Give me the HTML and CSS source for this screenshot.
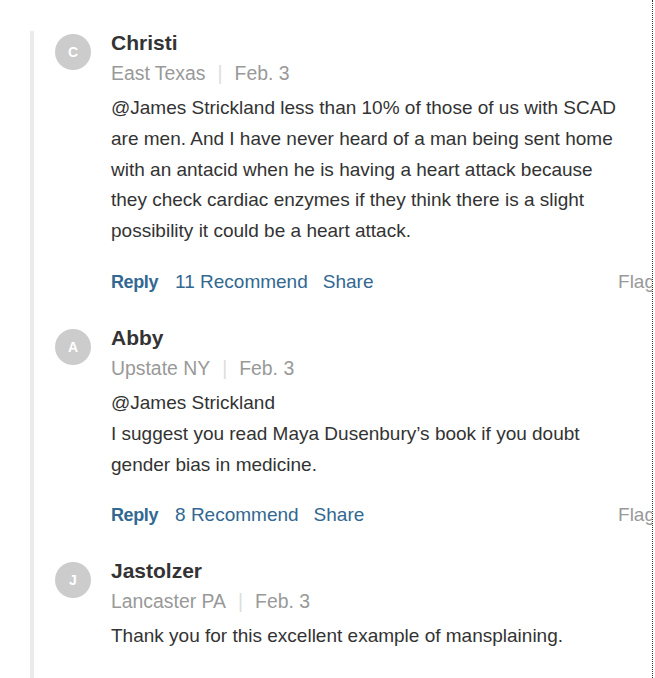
FILE: index.html
```html
<!DOCTYPE html>
<html>
<head>
<meta charset="utf-8">
<link rel="stylesheet" href="styles.css">
</head>
<body>
<div class="page">
  <div class="thread">
    <div class="comment">
      <div class="avatar">C</div>
      <div class="content">
        <div class="name">Christi</div>
        <div class="meta">East Texas<span class="sep">|</span>Feb. 3</div>
        <p class="text">@James Strickland less than 10% of those of us with SCAD are men. And I have never heard of a man being sent home with an antacid when he is having a heart attack because they check cardiac enzymes if they think there is a slight possibility it could be a heart attack.</p>
        <div class="actions">
          <span class="reply">Reply</span>
          <span class="rec">11 Recommend</span>
          <span class="share">Share</span>
          <span class="flag">Flag</span>
        </div>
      </div>
    </div>
    <div class="comment">
      <div class="avatar">A</div>
      <div class="content">
        <div class="name">Abby</div>
        <div class="meta">Upstate NY<span class="sep">|</span>Feb. 3</div>
        <p class="text">@James Strickland<br>I suggest you read Maya Dusenbury’s book if you doubt gender bias in medicine.</p>
        <div class="actions">
          <span class="reply">Reply</span>
          <span class="rec">8 Recommend</span>
          <span class="share">Share</span>
          <span class="flag">Flag</span>
        </div>
      </div>
    </div>
    <div class="comment">
      <div class="avatar">J</div>
      <div class="content">
        <div class="name">Jastolzer</div>
        <div class="meta">Lancaster PA<span class="sep">|</span>Feb. 3</div>
        <p class="text">Thank you for this excellent example of mansplaining.</p>
      </div>
    </div>
  </div>
</div>
</body>
</html>
```
FILE: styles.css
```css
html, body {
  margin: 0;
  padding: 0;
  background: #fff;
}
body {
  font-family: "Liberation Sans", Arial, sans-serif;
  color: #333;
}
.page {
  width: 653px;
  height: 678px;
  box-sizing: border-box;
  border-right: 1px dotted #333;
  overflow: hidden;
}
.thread {
  margin: 31px -3px 0 30px;
  border-left: 4px solid #ebebeb;
  padding-left: 21px;
  min-height: 700px;
}
.comment {
  display: flex;
  gap: 20px;
  margin-bottom: 32px;
}
.avatar {
  flex: none;
  width: 36px;
  height: 36px;
  margin-top: 3px;
  border-radius: 50%;
  background: #ccc;
  color: #fff;
  font-weight: bold;
  font-size: 14px;
  display: flex;
  align-items: center;
  justify-content: center;
}
.content {
  flex: 1;
  min-width: 0;
}
.name {
  font-size: 21px;
  line-height: 23px;
  font-weight: bold;
  color: #333;
}
.meta {
  margin-top: 7px;
  font-size: 19.4px;
  line-height: 24px;
  color: #999;
}
.sep {
  color: #ddd;
  margin: 0 12px;
}
.text {
  margin: 8px 0 0;
  width: 514px;
  font-size: 19px;
  line-height: 30.8px;
  color: #333;
}
.actions {
  margin-top: 23px;
  display: flex;
  font-size: 19px;
  line-height: 24px;
  color: #326891;
}
.reply {
  font-weight: bold;
  font-size: 18px;
  letter-spacing: -0.4px;
  margin-right: 17px;
}
.rec {
  margin-right: 15px;
}
.flag {
  margin-left: auto;
  color: #999;
}
```
